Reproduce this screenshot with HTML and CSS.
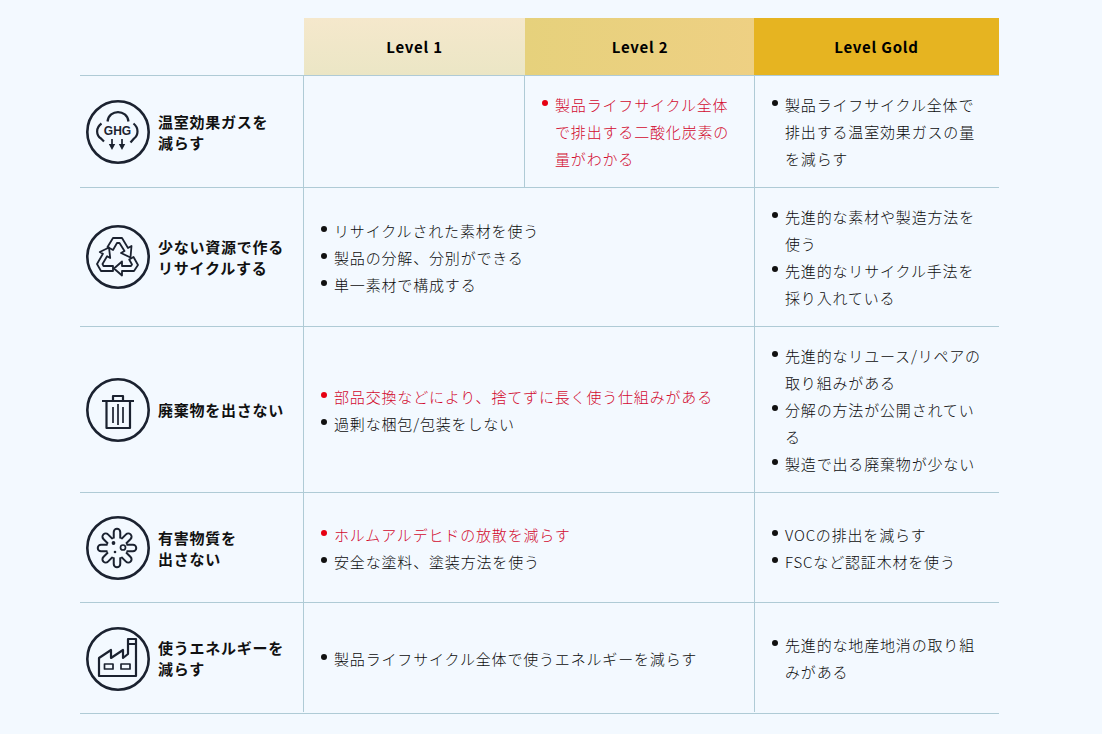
FILE: index.html
```html
<!DOCTYPE html>
<html lang="ja">
<head>
<meta charset="utf-8">
<title>Level</title>
<link rel="stylesheet" href="styles.css">
</head>
<body>
<div class="matrix">
  <div class="corner"></div>
  <div class="head lv1">Level 1</div>
  <div class="head lv2">Level 2</div>
  <div class="head gold">Level Gold</div>

  <div class="label">
    <svg class="icon" viewBox="0 0 64 64"><circle class="ring" cx="32" cy="32" r="30.700"/>
      <path class="ln" d="M21.500 21.500C23 9 41 9 42.500 21.500M15.500 23.500C9.500 28 10 35 15 38.500L18 41.500M47.500 23.500C53 28 52.500 35 48 38.500L44.500 42.500"/>
      <text class="ghg" x="31.500" y="35">GHG</text>
      <path class="ln th" d="M26 39V46M36 39V46"/><path class="fill" d="M22.800 44H29.200L26 50ZM32.800 44H39.200L36 50Z"/>
    </svg>
    <span>温室効果ガスを<br>減らす</span>
  </div>
  <div class="cell"></div>
  <div class="cell"><ul><li class="red">製品ライフサイクル全体で排出する二酸化炭素の量がわかる</li></ul></div>
  <div class="cell"><ul><li>製品ライフサイクル全体で排出する温室効果ガスの量を減らす</li></ul></div>

  <div class="label">
    <svg class="icon" viewBox="0 0 64 64"><circle class="ring" cx="32" cy="32" r="30.700"/>
      <path class="ln rc" d="M21.500 22L27 13H36L42 23L45.500 21L44.500 32.500L35 28L38.500 26L33.500 18H31L27 25Z"/>
      <path class="ln rc" d="M16.900 28.800L13.800 27L23 22.500L24.200 33L21.100 31.200L16.500 39L17.500 41H27V46H15L11 39Z"/>
      <path class="ln rc" d="M43.200 34.500L46 39.500L45 41H36V36.500L28 43.500L36 50.500V46H48L52 40L47.500 32Z"/>
    </svg>
    <span>少ない資源で作る<br>リサイクルする</span>
  </div>
  <div class="cell wide"><ul><li>リサイクルされた素材を使う</li><li>製品の分解、分別ができる</li><li>単一素材で構成する</li></ul></div>
  <div class="cell"><ul><li>先進的な素材や製造方法を使う</li><li>先進的なリサイクル手法を採り入れている</li></ul></div>

  <div class="label">
    <svg class="icon" viewBox="0 0 64 64"><circle class="ring" cx="32" cy="32" r="30.700"/>
      <path class="ln" d="M16 23H48M27 23V18H37V23M20.500 23V50H44V23"/>
      <path class="ln th" d="M27 29V45M32 26V47M37 29V45"/>
    </svg>
    <span>廃棄物を出さない</span>
  </div>
  <div class="cell wide"><ul><li class="red">部品交換などにより、捨てずに長く使う仕組みがある</li><li>過剰な梱包/包装をしない</li></ul></div>
  <div class="cell"><ul><li>先進的なリユース/リペアの取り組みがある</li><li>分解の方法が公開されている</li><li>製造で出る廃棄物が少ない</li></ul></div>

  <div class="label">
    <svg class="icon" viewBox="0 0 64 64"><circle class="ring" cx="32" cy="32" r="30.700"/>
      <g class="petal-o"><path d="M31 16V48M15 32H47M19.700 20.700L42.300 43.300M42.300 20.700L19.700 43.300"/></g>
      <circle class="core-o" cx="31" cy="32" r="11"/>
      <g class="petal-i"><path d="M31 16V48M15 32H47M19.700 20.700L42.300 43.300M42.300 20.700L19.700 43.300"/></g>
      <circle class="core-i" cx="31" cy="32" r="10"/>
      <circle class="fill" cx="27.500" cy="27" r="1.900"/><circle class="fill" cx="29" cy="36" r="1.300"/>
      <circle class="ln th" cx="37" cy="31.500" r="2.500"/>
    </svg>
    <span>有害物質を<br>出さない</span>
  </div>
  <div class="cell wide"><ul><li class="red">ホルムアルデヒドの放散を減らす</li><li>安全な塗料、塗装方法を使う</li></ul></div>
  <div class="cell"><ul><li>VOCの排出を減らす</li><li>FSCなど認証木材を使う</li></ul></div>

  <div class="label last">
    <svg class="icon low" viewBox="0 0 64 64"><circle class="ring" cx="32" cy="32" r="30.700"/>
      <path class="ln" d="M13 49V31L25 23V31L37 23V31L42 27V12H50V49ZM42 17H50"/>
      <path class="ln th" d="M18.500 37H27V42H18.500ZM35 37H44V42H35Z"/>
    </svg>
    <span>使うエネルギーを<br>減らす</span>
  </div>
  <div class="cell wide last"><ul><li>製品ライフサイクル全体で使うエネルギーを減らす</li></ul></div>
  <div class="cell last"><ul><li>先進的な地産地消の取り組みがある</li></ul></div>
  <div class="foot"></div>
</div>
</body>
</html>
```
FILE: styles.css
```css
* { box-sizing: border-box; }
html, body { margin: 0; height: 100%; }
body {
  background: #f3f9ff;
  color: #0c0c0c;
  font-family: "Noto Sans CJK JP", "Noto Sans", sans-serif;
  font-size: 15px;
  font-weight: 300;
  letter-spacing: 0.83px;
  overflow: hidden;
}
.matrix {
  display: grid;
  width: 919px;
  margin: 18px 0 0 80px;
  grid-template-columns: 224px 221px 230px 244px;
  grid-template-rows: 58px 112px 139px 166px 110px 109px 2px;
}
.corner { border-bottom: 1px solid #afcbd6; }
.head {
  display: flex;
  align-items: center;
  justify-content: center;
  font-weight: 700;
  letter-spacing: 0.75px;
  color: #000;
  border-bottom: 1px solid #afcbd6;
}
.lv1 { background: linear-gradient(180deg, #f5e8cc, #ebe6c5); }
.lv2 { background: linear-gradient(90deg, #e6d17c, #eed083); }
.gold { background: #e6b421; margin-left: -1px; }
.label {
  display: flex;
  align-items: center;
  gap: 8px;
  padding-left: 6px;
  font-weight: 700;
  letter-spacing: 0.75px;
  line-height: 21px;
  color: #111;
  border-bottom: 1px solid #afcbd6;
}
.cell {
  display: flex;
  align-items: center;
  margin-left: -1px;
  padding: 0 14px 0 17px;
  border-left: 1px solid #afcbd6;
  border-bottom: 1px solid #afcbd6;
  line-height: 27px;
}
.wide { grid-column: span 2; }
.last { border-bottom: none; padding-top: 1px; }
.low { margin-top: 2px; }
.foot { grid-column: 1 / -1; border-bottom: 1px solid #afcbd6; }
ul { list-style: none; margin: 0; padding: 0; }
li { position: relative; padding-left: 13px; }
li::before {
  content: "";
  position: absolute;
  left: 0;
  top: 9px;
  width: 6px;
  height: 6px;
  border-radius: 50%;
  background: #111;
}
.red { color: #d20a2e; }
.red::before { background: #e60012; }
.icon { width: 64px; height: 64px; flex: none; display: block; }
.ring { fill: none; stroke: #1b2230; stroke-width: 2.600; }
.ln { fill: none; stroke: #1b2230; stroke-width: 2.200; stroke-linejoin: round; }
.th { stroke-width: 1.700; }
.rc { stroke-width: 1.800; }
.fill { fill: #1b2230; }
.ghg { font-family: "Liberation Sans", sans-serif; font-size: 12px; font-weight: 700; text-anchor: middle; fill: #1b2230; letter-spacing: 0; }
.petal-o path { fill: none; stroke: #1b2230; stroke-width: 8.500; stroke-linecap: round; }
.petal-i path { fill: none; stroke: #f3f9ff; stroke-width: 4.500; stroke-linecap: round; }
.core-o { fill: #1b2230; }
.core-i { fill: #f3f9ff; }
```
